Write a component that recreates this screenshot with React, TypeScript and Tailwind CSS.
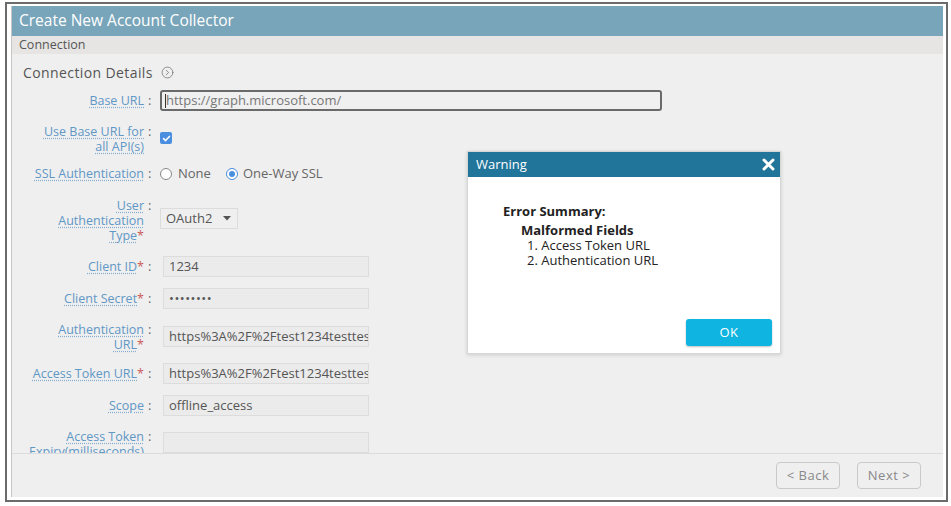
import React from 'react';
import { CircleChevronRight } from 'lucide-react';

type RowProps = {
  lines: string[];
  required?: boolean;
  rowClass: string;
  labelClass?: string;
  children: React.ReactNode;
};

function FieldRow({ lines, required, rowClass, labelClass = '', children }: RowProps) {
  return (
    <div className={`flex items-start ${rowClass}`}>
      <div className={`w-[132px] text-right text-[12.5px] leading-[15px] text-[#5f97c6] ${labelClass}`}>
        {lines.map((line, i) => (
          <div key={i}>
            <span className="underline decoration-dotted decoration-[#86acd0] underline-offset-[2px]">{line}</span>
            {required && i === lines.length - 1 && <span className="text-[#cc5a5a]">*</span>}
          </div>
        ))}
      </div>
      <div className={`w-[16px] pl-[4px] text-[13px] leading-[15px] text-[#666] ${labelClass}`}>:</div>
      {children}
    </div>
  );
}

function TextBox({ value, className = '' }: { value: string; className?: string }) {
  return (
    <div className={`ml-[3px] w-[206px] h-[21px] bg-[#ebebeb] border border-[#dcdcdc] pl-[5px] text-[13px] leading-[19px] text-[#555] overflow-hidden whitespace-nowrap ${className}`}>
      {value}
    </div>
  );
}

export default function App() {
  return (
    <div className="w-[951px] h-[506px] bg-white relative overflow-hidden font-['Open_Sans',sans-serif]">
      <div className="ml-[5px] mt-[2px] w-[943px] h-[500px] border-2 border-[#6b6b6b] pl-[4px] pt-[2px] pr-[3px] pb-[3px]">
        <div className="h-full flex flex-col bg-[#efefef] border-l border-[#c6c6c6]">
          <div className="h-[30px] shrink-0 bg-[#78a5ba] flex items-center pl-[7px] text-[15.5px] text-white">
            Create New Account Collector
          </div>
          <div className="h-[18px] shrink-0 bg-[#e6e5e3] flex items-center pl-[7px] text-[12.5px] text-[#555]">
            Connection
          </div>

          <div className="h-[399px] shrink-0 overflow-hidden">
            <div className="mt-[8px] pl-[11px] flex items-center gap-[8px] h-[20px] text-[14px] text-[#555] tracking-[0.4px]">
              Connection Details
              <CircleChevronRight size={13} strokeWidth={1.5} className="text-[#777]" />
            </div>

            <FieldRow lines={['Base URL']} rowClass="mt-[8px]" labelClass="pt-[3px]">
              <div className="w-[502px] h-[21px] border-2 border-[#6a6a6a] rounded-[3px] bg-[#f0f0f0] flex items-center pl-[3px] text-[13px] text-[#777]">
                <span className="w-px h-[14px] bg-[#333]" />
                https://graph.microsoft.com/
              </div>
            </FieldRow>

            <FieldRow lines={['Use Base URL for', 'all API(s)']} rowClass="mt-[13px]">
              <div className="mt-[8px] w-[12px] h-[12px] rounded-[2px] bg-[#4a8ee0] flex items-center justify-center">
                <svg width="9" height="9" viewBox="0 0 10 10">
                  <path d="M1.8 5.2 L4 7.3 L8.3 2.7" fill="none" stroke="white" strokeWidth="1.8" strokeLinecap="round" strokeLinejoin="round" />
                </svg>
              </div>
            </FieldRow>

            <FieldRow lines={['SSL Authentication']} rowClass="mt-[12px]">
              <div className="flex items-center h-[15px] text-[13px] text-[#666]">
                <span className="w-[12px] h-[12px] rounded-full border border-[#888] bg-white" />
                <span className="ml-[6px]">None</span>
                <span className="ml-[15px] w-[12px] h-[12px] rounded-full border border-[#4a8ee0] bg-white flex items-center justify-center">
                  <span className="w-[6px] h-[6px] rounded-full bg-[#4a8ee0]" />
                </span>
                <span className="ml-[5px]">One-Way SSL</span>
              </div>
            </FieldRow>

            <FieldRow lines={['User', 'Authentication', 'Type']} required rowClass="mt-[17px]">
              <div className="mt-[10px] w-[78px] h-[21px] bg-[#efefef] border border-[#dcdcdc] flex items-center justify-between pl-[5px] pr-[6px] text-[13px] text-[#555]">
                OAuth2
                <svg width="8" height="5" viewBox="0 0 8 5">
                  <path d="M0 0 L8 0 L4 4.5 Z" fill="#555" />
                </svg>
              </div>
            </FieldRow>

            <FieldRow lines={['Client ID']} required rowClass="mt-[13px]" labelClass="pt-[3px]">
              <TextBox value="1234" />
            </FieldRow>

            <FieldRow lines={['Client Secret']} required rowClass="mt-[11px]" labelClass="pt-[3px]">
              <TextBox value="••••••••" className="text-[10px] tracking-[0.5px]" />
            </FieldRow>

            <FieldRow lines={['Authentication', 'URL']} required rowClass="mt-[13px]">
              <TextBox value="https%3A%2F%2Ftest1234testtest" className="mt-[4px]" />
            </FieldRow>

            <FieldRow lines={['Access Token URL']} required rowClass="mt-[11px]" labelClass="pt-[3px]">
              <TextBox value="https%3A%2F%2Ftest1234testtest" />
            </FieldRow>

            <FieldRow lines={['Scope']} rowClass="mt-[11px]" labelClass="pt-[3px]">
              <TextBox value="offline_access" />
            </FieldRow>

            <FieldRow lines={['Access Token', 'Expiry(milliseconds)']} rowClass="mt-[13px]">
              <TextBox value="" className="mt-[3px]" />
            </FieldRow>
          </div>

          <div className="flex-1 border-t border-[#dcdcdc] flex justify-end items-start pt-[8px] pr-[22px] gap-[17px]">
            <button className="w-[64px] h-[27px] border border-[#c9c9c9] rounded-[4px] text-[13px] text-[#888] tracking-[0.5px]">
              &lt; Back
            </button>
            <button className="w-[64px] h-[27px] border border-[#c9c9c9] rounded-[4px] text-[13px] text-[#888] tracking-[0.5px]">
              Next &gt;
            </button>
          </div>
        </div>
      </div>

      <div className="absolute left-[467px] top-[151px] w-[314px] h-[203px] bg-white border border-[#d6d6d6] shadow-[0_1px_4px_rgba(0,0,0,0.15)] flex flex-col">
        <div className="h-[25px] bg-[#21749a] flex items-center justify-between pl-[8px] pr-[5px] text-[13px] text-white">
          Warning
          <svg width="13" height="13" viewBox="0 0 13 13">
            <path d="M2 2 L11 11 M11 2 L2 11" stroke="white" strokeWidth="3" strokeLinecap="round" />
          </svg>
        </div>
        <div className="pl-[35px] pt-[27px] text-[13px] leading-[15px] text-[#222]">
          <div className="font-bold">Error Summary:</div>
          <div className="pl-[18px] mt-[4px] font-bold">Malformed Fields</div>
          <div className="pl-[24px]">1. Access Token URL</div>
          <div className="pl-[24px]">2. Authentication URL</div>
        </div>
        <div className="mt-auto mb-[7px] mr-[8px] self-end">
          <button className="w-[86px] h-[27px] rounded-[3px] bg-[#0fb4e0] text-white text-[13px] tracking-[0.5px] shadow-[0_1px_2px_rgba(0,0,0,0.25)]">
            OK
          </button>
        </div>
      </div>
    </div>
  );
}
